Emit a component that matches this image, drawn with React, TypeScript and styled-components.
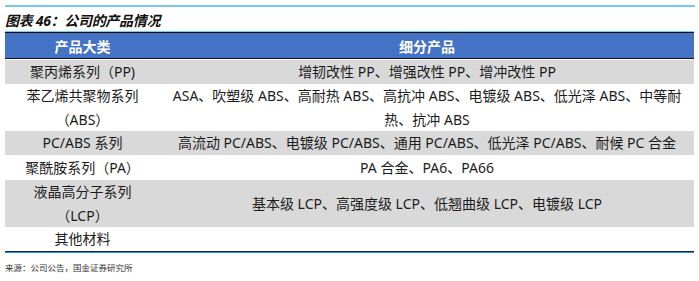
import React from 'react';
import styled, { createGlobalStyle } from 'styled-components';

const GlobalStyle = createGlobalStyle`
  html, body {
    margin: 0;
    padding: 0;
    background: #ffffff;
  }
  body {
    font-family: "Noto Sans", "Noto Sans CJK SC", sans-serif;
    color: #1c1c1c;
  }
`;

const Page = styled.div`
  width: 699px;
  height: 281px;
  padding: 5px 4px 0 5px;
  box-sizing: border-box;
`;

const TopRule = styled.div`
  height: 2px;
  width: 690px;
  background: #79c9ef;
`;

const Title = styled.div`
  height: 25px;
  display: flex;
  align-items: center;
  font-size: 14px;
  font-weight: 700;
  font-style: italic;
  letter-spacing: -0.3px;
  color: #111;
`;

const Table = styled.div`
  width: 689px;
  border-bottom: 1px solid #0e2a44;
  box-shadow: 0 1px 0 #2a8fd0;
`;

const HeaderRow = styled.div`
  display: grid;
  grid-template-columns: 155px 1fr;
  height: 25px;
  background: #4472c4;
  border-top: 1px solid #111;
  border-bottom: 1px solid #111;
  box-shadow: 0 -1px 0 #79c9ef;
  margin-bottom: 1px;
`;

const HeadCell = styled.div`
  display: flex;
  align-items: center;
  justify-content: center;
  color: #ffffff;
  font-size: 14px;
  font-weight: 700;
`;

const Row = styled.div<{ $shaded?: boolean; $height: number }>`
  display: grid;
  grid-template-columns: 155px 1fr;
  height: ${(p) => p.$height}px;
  background: ${(p) => (p.$shaded ? '#d9d9d9' : '#ffffff')};
`;

const Cell = styled.div`
  display: flex;
  align-items: center;
  justify-content: center;
  text-align: center;
  font-size: 14px;
  line-height: 24px;
  white-space: nowrap;
`;

const Source = styled.div`
  margin-top: 9px;
  font-size: 8.5px;
  color: #333;
`;

interface Item {
  category: React.ReactNode;
  products: React.ReactNode;
  height: number;
}

const items: Item[] = [
  {
    category: '聚丙烯系列（PP)',
    products: '增韧改性 PP、增强改性 PP、增冲改性 PP',
    height: 24
  },
  {
    category: (
      <>
        苯乙烯共聚物系列
        <br />
        （ABS）
      </>
    ),
    products: (
      <>
        ASA、吹塑级 ABS、高耐热 ABS、高抗冲 ABS、电镀级 ABS、低光泽 ABS、中等耐
        <br />
        热、抗冲 ABS
      </>
    ),
    height: 47
  },
  {
    category: 'PC/ABS 系列',
    products: '高流动 PC/ABS、电镀级 PC/ABS、通用 PC/ABS、低光泽 PC/ABS、耐候 PC 合金',
    height: 24
  },
  {
    category: '聚酰胺系列（PA）',
    products: 'PA 合金、PA6、PA66',
    height: 25
  },
  {
    category: (
      <>
        液晶高分子系列
        <br />
        （LCP）
      </>
    ),
    products: '基本级 LCP、高强度级 LCP、低翘曲级 LCP、电镀级 LCP',
    height: 47
  },
  {
    category: '其他材料',
    products: '',
    height: 24
  }
];

export default function App(): JSX.Element {
  return (
    <>
      <GlobalStyle />
      <Page>
        <TopRule />
        <Title>图表 46：公司的产品情况</Title>
        <Table>
          <HeaderRow>
            <HeadCell>产品大类</HeadCell>
            <HeadCell>细分产品</HeadCell>
          </HeaderRow>
          {items.map((item, i) => (
            <Row key={i} $shaded={i % 2 === 0} $height={item.height}>
              <Cell>{item.category}</Cell>
              <Cell>{item.products}</Cell>
            </Row>
          ))}
        </Table>
        <Source>来源：公司公告，国金证券研究所</Source>
      </Page>
    </>
  );
}
